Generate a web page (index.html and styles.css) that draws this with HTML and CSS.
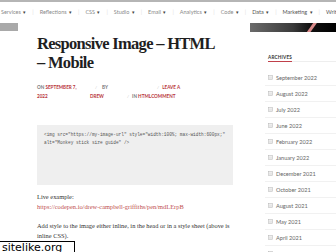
FILE: index.html
```html
<!DOCTYPE html>
<html>
<head>
    <title>Responsive Image – HTML – Mobile</title>
    <link rel="stylesheet" href="styles.css">
</head>
<body>
    <div class="topline"></div>
    <nav class="nav">
        <span class="nav-item faded">Services <i>▾</i></span><span class="sep">|</span>
        <span class="nav-item faded">Reflections <i>▾</i></span><span class="sep">|</span>
        <span class="nav-item faded">CSS <i>▾</i></span><span class="sep">|</span>
        <span class="nav-item faded">Studio <i>▾</i></span><span class="sep">|</span>
        <span class="nav-item faded">Email <i>▾</i></span><span class="sep">|</span>
        <span class="nav-item faded">Analytics <i>▾</i></span><span class="sep">|</span>
        <span class="nav-item faded">Code <i>▾</i></span><span class="sep">|</span>
        <span class="nav-item">Data <i>▾</i></span><span class="sep">|</span>
        <span class="nav-item">Marketing <i>▾</i></span><span class="sep">|</span>
        <span class="nav-item">Writing</span>
    </nav>

    <div class="page">
        <div class="gutter">
            <div class="gutter-block"></div>
        </div>

        <main class="main">
            <h1 class="post-title">Responsive Image – HTML <span class="nowrap">– Mobile</span></h1>

            <div class="meta">
                <div class="meta-row">
                    <span class="m-date">On <a href="#">September 7,</a></span>
                    <span class="m-slash s1">/</span>
                    <span class="m-by">By</span>
                    <span class="m-slash s2">/</span>
                    <a class="m-leave" href="#">Leave a</a>
                </div>
                <div class="meta-row">
                    <a class="m-year" href="#">2022</a>
                    <a class="m-drew" href="#">Drew</a>
                    <span class="m-slash s3">/</span>
                    <span class="m-cat">In <a href="#">HTML</a></span><a class="m-comment" href="#">Comment</a>
                </div>
            </div>

            <pre class="code">&lt;img src="https://my-image-url" style="width:100%; max-width:600px;"
alt="Monkey stick size guide" /&gt;</pre>

            <p class="text">Live example:<br>
                <a class="link" href="#">https://codepen.io/drew-campbell-griffiths/pen/mdLErpB</a></p>

            <p class="text">Add style to the image either inline, in the head or in a style sheet (above is inline CSS).</p>
        </main>

        <aside class="sidebar">
            <div class="side-image"><span class="stroke"></span></div>
            <h3 class="widget-title">Archives</h3>
            <ul class="archive">
                <li><svg viewBox="0 0 5 5"><rect x="0.5" y="0.5" width="4" height="4" fill="none" stroke="#bbb" stroke-width="0.6"/><path d="M1 2h3M1 3.2h3" stroke="#bbb" stroke-width="0.5"/></svg>September 2022</li>
                <li><svg viewBox="0 0 5 5"><rect x="0.5" y="0.5" width="4" height="4" fill="none" stroke="#bbb" stroke-width="0.6"/><path d="M1 2h3M1 3.2h3" stroke="#bbb" stroke-width="0.5"/></svg>August 2022</li>
                <li><svg viewBox="0 0 5 5"><rect x="0.5" y="0.5" width="4" height="4" fill="none" stroke="#bbb" stroke-width="0.6"/><path d="M1 2h3M1 3.2h3" stroke="#bbb" stroke-width="0.5"/></svg>July 2022</li>
                <li><svg viewBox="0 0 5 5"><rect x="0.5" y="0.5" width="4" height="4" fill="none" stroke="#bbb" stroke-width="0.6"/><path d="M1 2h3M1 3.2h3" stroke="#bbb" stroke-width="0.5"/></svg>June 2022</li>
                <li><svg viewBox="0 0 5 5"><rect x="0.5" y="0.5" width="4" height="4" fill="none" stroke="#bbb" stroke-width="0.6"/><path d="M1 2h3M1 3.2h3" stroke="#bbb" stroke-width="0.5"/></svg>February 2022</li>
                <li><svg viewBox="0 0 5 5"><rect x="0.5" y="0.5" width="4" height="4" fill="none" stroke="#bbb" stroke-width="0.6"/><path d="M1 2h3M1 3.2h3" stroke="#bbb" stroke-width="0.5"/></svg>January 2022</li>
                <li><svg viewBox="0 0 5 5"><rect x="0.5" y="0.5" width="4" height="4" fill="none" stroke="#bbb" stroke-width="0.6"/><path d="M1 2h3M1 3.2h3" stroke="#bbb" stroke-width="0.5"/></svg>December 2021</li>
                <li><svg viewBox="0 0 5 5"><rect x="0.5" y="0.5" width="4" height="4" fill="none" stroke="#bbb" stroke-width="0.6"/><path d="M1 2h3M1 3.2h3" stroke="#bbb" stroke-width="0.5"/></svg>October 2021</li>
                <li><svg viewBox="0 0 5 5"><rect x="0.5" y="0.5" width="4" height="4" fill="none" stroke="#bbb" stroke-width="0.6"/><path d="M1 2h3M1 3.2h3" stroke="#bbb" stroke-width="0.5"/></svg>August 2021</li>
                <li><svg viewBox="0 0 5 5"><rect x="0.5" y="0.5" width="4" height="4" fill="none" stroke="#bbb" stroke-width="0.6"/><path d="M1 2h3M1 3.2h3" stroke="#bbb" stroke-width="0.5"/></svg>May 2021</li>
                <li><svg viewBox="0 0 5 5"><rect x="0.5" y="0.5" width="4" height="4" fill="none" stroke="#bbb" stroke-width="0.6"/><path d="M1 2h3M1 3.2h3" stroke="#bbb" stroke-width="0.5"/></svg>April 2021</li>
                <li><svg viewBox="0 0 5 5"><rect x="0.5" y="0.5" width="4" height="4" fill="none" stroke="#bbb" stroke-width="0.6"/><path d="M1 2h3M1 3.2h3" stroke="#bbb" stroke-width="0.5"/></svg>March 2021</li>
            </ul>
        </aside>
    </div>

    <div class="watermark">sitelike.org</div>
</body>
</html>
```

FILE: styles.css
```css
body, html {
    margin: 0;
    height: 100%;
    overflow: hidden;
    background: #fff;
    font-family: Lato, "Liberation Sans", sans-serif;
}

.topline {
    height: 2px;
    background: #b5b5b5;
}

.nav {
    display: flex;
    align-items: center;
    height: 20px;
    padding-left: 1px;
    font-size: 5.5px;
    color: #555;
    white-space: nowrap;
}

.nav-item i {
    font-style: normal;
    font-size: 5px;
    color: #444;
    margin-left: 1px;
}

.nav-item.faded {
    color: #8a8a8a;
}

.sep {
    color: #ddd;
    margin: 0 6px;
}

.page {
    display: flex;
    height: 230px;
}

.gutter {
    width: 37px;
    flex-shrink: 0;
    padding-top: 1px;
}

.gutter-block {
    width: 18px;
    height: 8px;
    background: #a9a9a9;
}

.main {
    width: 196px;
    flex-shrink: 0;
    margin-right: 17px;
    padding-top: 12px;
}

.post-title {
    margin: 0;
    font-family: "Liberation Serif", serif;
    font-weight: bold;
    font-size: 16.5px;
    line-height: 19px;
    letter-spacing: -0.7px;
    color: #1f1f1f;
}

.nowrap {
    white-space: nowrap;
}

.meta {
    margin-top: 11px;
    font-size: 4.6px;
    font-weight: bold;
    line-height: 9px;
    text-transform: uppercase;
    color: #777;
}

.meta a {
    color: #b8343a;
    text-decoration: none;
}

.meta-row {
    display: flex;
}

.m-date { width: 58px; }
.m-slash { color: #ccc; font-weight: normal; }
.s1 { margin-right: 5px; }
.m-by { width: 55px; }
.s2 { margin-right: 3px; }
.m-year { width: 53px; }
.m-drew { width: 37px; }
.s3 { margin-right: 3px; }

.code {
    margin: 24px 0 0;
    height: 50px;
    padding: 6px 7px 4px;
    background: #efefef;
    font-family: "Liberation Mono", monospace;
    font-size: 4.45px;
    line-height: 8px;
    color: #555;
}

.text {
    margin: 7px 0 0;
    font-family: "Liberation Serif", serif;
    font-size: 6.4px;
    line-height: 10px;
    color: #333;
}

.text + .text {
    margin-top: 9px;
}

.link {
    color: #c0504f;
    text-decoration: none;
}

.sidebar {
    width: 86px;
    flex-shrink: 0;
    padding-top: 1px;
}

.side-image {
    position: relative;
    height: 9px;
    overflow: hidden;
    background: linear-gradient(90deg, #6b6b6b, #3a3a3a 50%, #111 70%, #000);
}

.stroke {
    position: absolute;
    left: 60px;
    top: -2px;
    width: 3px;
    height: 14px;
    background: #d98a8a;
    transform: rotate(35deg);
}

.widget-title {
    margin: 21px 0 0 18px;
    font-size: 4.6px;
    line-height: 8px;
    font-weight: bold;
    letter-spacing: 0.2px;
    text-transform: uppercase;
    color: #333;
    border-bottom: 1px solid #eee;
}

.widget-title::after {
    content: "";
    display: block;
    width: 24px;
    height: 1px;
    background: #c0404a;
    margin-bottom: -1px;
}

.archive {
    list-style: none;
    margin: 8px 0 0 15px;
    padding: 0;
}

.archive li {
    display: flex;
    align-items: center;
    height: 16px;
    padding-left: 3px;
    border-bottom: 1px solid #f1f1f1;
    box-sizing: border-box;
    font-size: 5.6px;
    color: #666;
}

.archive svg {
    width: 5px;
    height: 5px;
    margin-right: 3px;
}

.watermark {
    position: fixed;
    left: -1px;
    bottom: -3px;
    padding: 0 12px 0 2px;
    background: #fff;
    border: 1px solid #000;
    font-family: "DejaVu Sans", sans-serif;
    font-size: 11px;
    line-height: 12px;
    color: #000;
}
```
